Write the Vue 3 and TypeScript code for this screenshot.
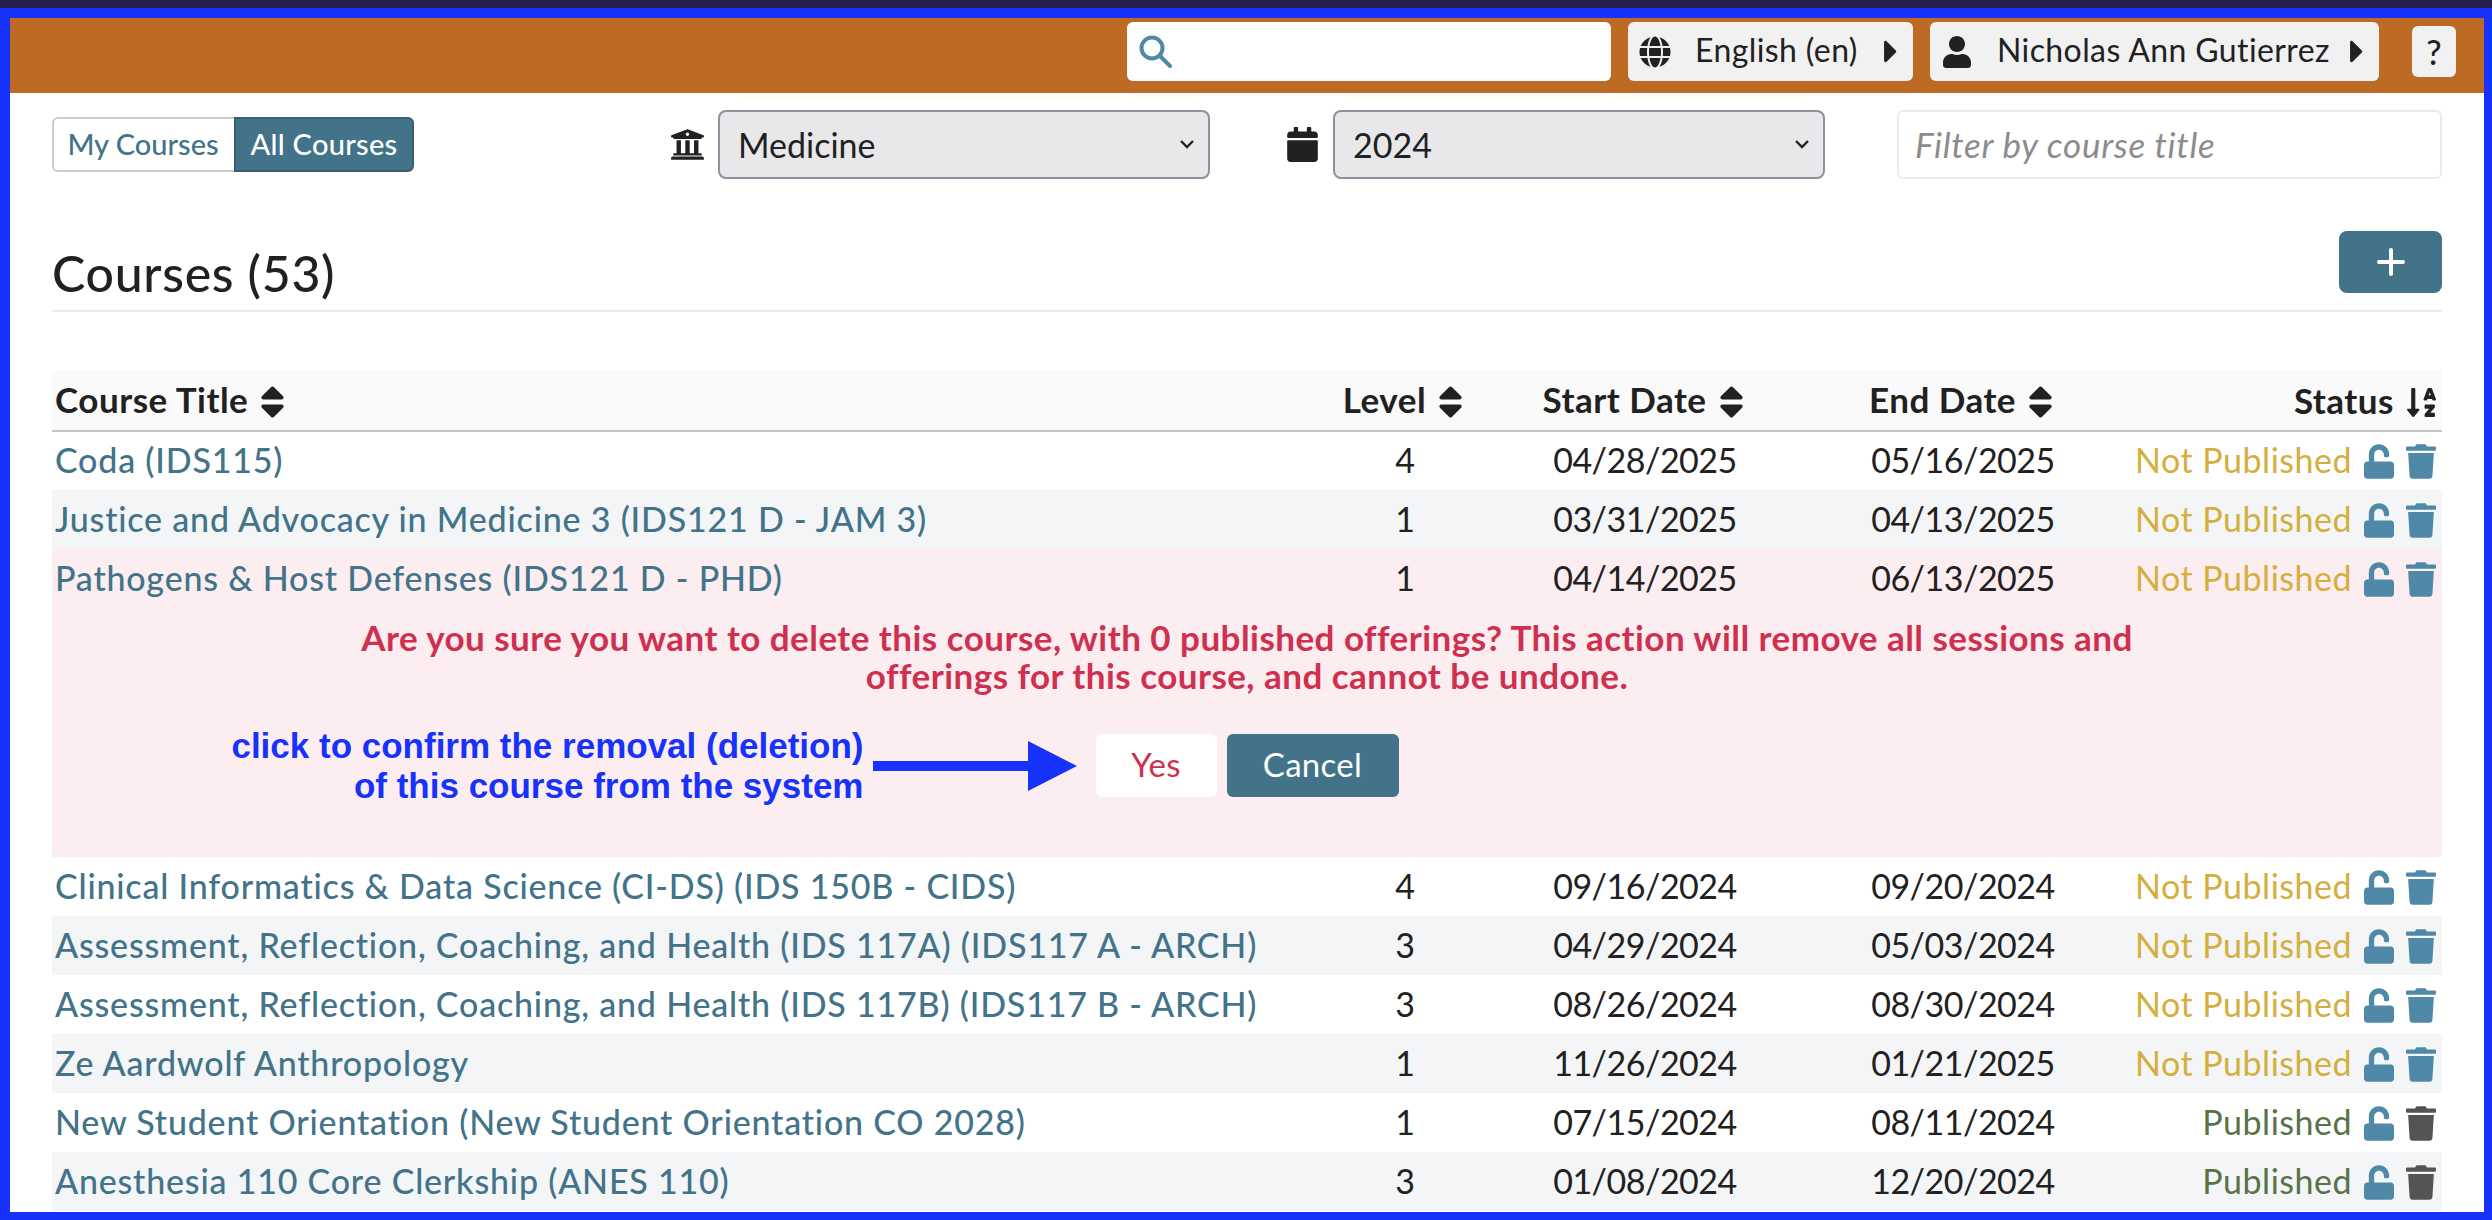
<script setup lang="ts">
type Course = {
  title: string;
  level: number;
  start: string;
  end: string;
  published: boolean;
  confirming?: boolean;
  alt?: boolean;
};

const courses: Course[] = [
  { title: 'Coda (IDS115)', level: 4, start: '04/28/2025', end: '05/16/2025', published: false },
  { title: 'Justice and Advocacy in Medicine 3 (IDS121 D - JAM 3)', level: 1, start: '03/31/2025', end: '04/13/2025', published: false, alt: true },
  { title: 'Pathogens & Host Defenses (IDS121 D - PHD)', level: 1, start: '04/14/2025', end: '06/13/2025', published: false, confirming: true },
  { title: 'Clinical Informatics & Data Science (CI-DS) (IDS 150B - CIDS)', level: 4, start: '09/16/2024', end: '09/20/2024', published: false },
  { title: 'Assessment, Reflection, Coaching, and Health (IDS 117A) (IDS117 A - ARCH)', level: 3, start: '04/29/2024', end: '05/03/2024', published: false, alt: true },
  { title: 'Assessment, Reflection, Coaching, and Health (IDS 117B) (IDS117 B - ARCH)', level: 3, start: '08/26/2024', end: '08/30/2024', published: false },
  { title: 'Ze Aardwolf Anthropology', level: 1, start: '11/26/2024', end: '01/21/2025', published: false, alt: true },
  { title: 'New Student Orientation (New Student Orientation CO 2028)', level: 1, start: '07/15/2024', end: '08/11/2024', published: true },
  { title: 'Anesthesia 110 Core Clerkship (ANES 110)', level: 3, start: '01/08/2024', end: '12/20/2024', published: true, alt: true },
];

const sortPath = 'M41 288h238c21.4 0 32.1 25.9 17 41L177 448c-9.4 9.4-24.6 9.4-33.9 0L24 329c-15.1-15.1-4.4-41 17-41zm255-105L177 64c-9.4-9.4-24.6-9.4-33.9 0L24 183c-15.1 15.1-4.4 41 17 41h238c21.4 0 32.1-25.9 17-41z';
const caretPath = 'M0 384.662V127.338c0-17.818 21.543-26.741 34.142-14.142l128.662 128.662c7.81 7.81 7.81 20.474 0 28.284L34.142 398.804C21.543 411.404 0 402.48 0 384.662z';
const unlockPath = 'M400 256H152V152.9c0-39.6 31.7-72.5 71.3-72.9 40-.4 72.7 32.1 72.7 72v16c0 13.3 10.7 24 24 24h32c13.3 0 24-10.7 24-24v-16C376 68 307.5-.3 223.5 0 139.5.3 72 69.5 72 153.5V256H48c-26.5 0-48 21.5-48 48v160c0 26.5 21.5 48 48 48h352c26.5 0 48-21.5 48-48V304c0-26.5-21.5-48-48-48z';
const trashPath = 'M432 32H312l-9.4-18.7A24 24 0 0 0 281.1 0H166.8a23.72 23.72 0 0 0-21.4 13.3L136 32H16A16 16 0 0 0 0 48v32a16 16 0 0 0 16 16h416a16 16 0 0 0 16-16V48a16 16 0 0 0-16-16zM53.2 467a48 48 0 0 0 47.9 45h245.8a48 48 0 0 0 47.9-45L416 128H32z';
</script>

<template>
  <div class="page">
    <div class="strip"></div>
    <div class="frame">
      <header class="topbar">
        <div class="search">
          <svg class="search-icon" viewBox="0 0 33 33"><circle cx="13" cy="13" r="10.5" /><path d="M21 21L31 31" /></svg>
          <input type="text" />
        </div>
        <button class="top-btn lang">
          <svg class="top-icon" viewBox="0 0 496 512"><path d="M336.5 160C322 70.7 287.8 8 248 8s-74 62.7-88.5 152h177zM152 256c0 22.2 1.2 43.5 3.3 64h185.3c2.1-20.5 3.3-41.8 3.3-64s-1.2-43.5-3.3-64H155.3c-2.1 20.5-3.3 41.8-3.3 64zm324.7-96c-28.6-67.9-86.5-120.4-158-141.6 24.4 33.8 41.2 84.7 50 141.6h108zM177.2 18.4C105.8 39.6 47.8 92.1 19.3 160h108c8.7-56.9 25.5-107.8 49.9-141.6zM487.4 192H372.7c2.1 21 3.3 42.5 3.3 64s-1.2 43-3.3 64h114.6c5.5-20.5 8.6-41.8 8.6-64s-3.1-43.5-8.5-64zM120 256c0-21.5 1.2-43 3.3-64H8.6C3.2 212.5 0 233.8 0 256s3.2 43.5 8.6 64h114.6c-2-21-3.2-42.5-3.2-64zm39.5 96c14.5 89.3 48.7 152 88.5 152s74-62.7 88.5-152h-177zm159.3 141.6c71.4-21.2 129.4-73.7 158-141.6h-108c-8.8 56.9-25.6 107.8-50 141.6zM19.3 352c28.6 67.9 86.5 120.4 158 141.6-24.4-33.8-41.2-84.7-50-141.6h-108z" /></svg>
          <span>English (en)</span>
          <svg class="caret" viewBox="0 0 192 512"><path :d="caretPath" /></svg>
        </button>
        <button class="top-btn user">
          <svg class="top-icon" viewBox="0 0 448 512"><path d="M224 256c70.7 0 128-57.3 128-128S294.7 0 224 0 96 57.3 96 128s57.3 128 128 128zm89.6 32h-16.7c-22.2 10.2-46.9 16-72.9 16s-50.6-5.8-72.9-16h-16.7C60.2 288 0 348.2 0 422.4V464c0 26.5 21.5 48 48 48h352c26.5 0 48-21.5 48-48v-41.6c0-74.2-60.2-134.4-134.4-134.4z" /></svg>
          <span>Nicholas Ann Gutierrez</span>
          <svg class="caret" viewBox="0 0 192 512"><path :d="caretPath" /></svg>
        </button>
        <button class="help">?</button>
      </header>

      <main class="content">
        <div class="toolbar">
          <div class="toggle">
            <button class="toggle-btn">My Courses</button>
            <button class="toggle-btn on">All Courses</button>
          </div>
          <div class="filter school">
            <svg class="filter-icon" viewBox="0 0 512 512"><path d="M496 128v16a8 8 0 0 1-8 8h-24v12c0 6.627-5.373 12-12 12H60c-6.627 0-12-5.373-12-12v-12H24a8 8 0 0 1-8-8v-16a8 8 0 0 1 4.941-7.392l232-88a7.996 7.996 0 0 1 6.118 0l232 88A8 8 0 0 1 496 128zm-24 304H40c-13.255 0-24 10.745-24 24v16a8 8 0 0 0 8 8h464a8 8 0 0 0 8-8v-16c0-13.255-10.745-24-24-24zM96 192v192H60c-6.627 0-12 5.373-12 12v20h416v-20c0-6.627-5.373-12-12-12h-36V192h-64v192h-64V192h-64v192h-64V192H96z" /><circle cx="256" cy="106" r="24" fill="#fff" /></svg>
            <div class="select-wrap">
              <select><option>Medicine</option></select>
              <svg class="chevron" viewBox="0 0 16 10"><path d="M2 2l6 6 6-6" /></svg>
            </div>
          </div>
          <div class="filter year">
            <svg class="filter-icon cal" viewBox="0 0 448 512"><path d="M12 192h424c6.6 0 12 5.4 12 12v260c0 26.5-21.5 48-48 48H48c-26.5 0-48-21.5-48-48V204c0-6.6 5.4-12 12-12zm436-44v-36c0-26.5-21.5-48-48-48h-48V12c0-6.6-5.4-12-12-12h-40c-6.6 0-12 5.4-12 12v52H160V12c0-6.6-5.4-12-12-12h-40c-6.6 0-12 5.4-12 12v52H48C21.5 64 0 85.5 0 112v36c0 6.6 5.4 12 12 12h424c6.6 0 12-5.4 12-12z" /></svg>
            <div class="select-wrap">
              <select><option>2024</option></select>
              <svg class="chevron" viewBox="0 0 16 10"><path d="M2 2l6 6 6-6" /></svg>
            </div>
          </div>
          <input class="title-filter" type="text" placeholder="Filter by course title" />
        </div>

        <div class="heading">
          <h2>Courses (53)</h2>
          <button class="add">
            <svg viewBox="0 0 28 28"><path d="M14 2v24M2 14h24" /></svg>
          </button>
        </div>

        <table>
          <colgroup>
            <col class="c-title" />
            <col class="c-level" />
            <col class="c-start" />
            <col class="c-end" />
            <col />
          </colgroup>
          <thead>
            <tr>
              <th class="left">Course Title <svg class="sort" viewBox="0 0 320 512"><path :d="sortPath" /></svg></th>
              <th>Level <svg class="sort" viewBox="0 0 320 512"><path :d="sortPath" /></svg></th>
              <th>Start Date <svg class="sort" viewBox="0 0 320 512"><path :d="sortPath" /></svg></th>
              <th>End Date <svg class="sort" viewBox="0 0 320 512"><path :d="sortPath" /></svg></th>
              <th class="right">Status <svg class="sort-alpha" viewBox="0 0 448 512"><path d="M176 352h-48V48a16 16 0 0 0-16-16H80a16 16 0 0 0-16 16v304H16c-14.19 0-21.36 17.24-11.29 27.31l80 96a16 16 0 0 0 22.62 0l80-96C197.35 369.26 190.22 352 176 352zm240-64H288a16 16 0 0 0-16 16v32a16 16 0 0 0 16 16h56l-61.26 70.45A32 32 0 0 0 272 446.37V464a16 16 0 0 0 16 16h128a16 16 0 0 0 16-16v-32a16 16 0 0 0-16-16h-56l61.26-70.45A32 32 0 0 0 432 321.63V304a16 16 0 0 0-16-16zm31.06-85.38l-59.27-160A16 16 0 0 0 372.72 32h-41.44a16 16 0 0 0-15.07 10.62l-59.27 160A16 16 0 0 0 272 224h24.83a16 16 0 0 0 15.23-11.08l4.42-12.92h71l4.42 12.92A16 16 0 0 0 407.16 224H432a16 16 0 0 0 15.06-21.38zM335.61 144L352 96l16.39 48z" /></svg></th>
            </tr>
          </thead>
          <tbody v-for="c in courses" :key="c.title">
            <tr :class="{ alt: c.alt, pink: c.confirming }">
              <td class="left"><a>{{ c.title }}</a></td>
              <td>{{ c.level }}</td>
              <td class="date">{{ c.start }}</td>
              <td class="date">{{ c.end }}</td>
              <td class="right status">
                <span :class="c.published ? 'published' : 'unpublished'">{{ c.published ? 'Published' : 'Not Published' }}</span>
                <svg class="unlock" viewBox="0 0 448 512"><path :d="unlockPath" /></svg>
                <svg class="trash" :class="{ dark: c.published }" viewBox="0 0 448 512"><path :d="trashPath" /></svg>
              </td>
            </tr>
            <tr v-if="c.confirming" class="pink confirm-row">
              <td colspan="5">
                <p class="warning">Are you sure you want to delete this course, with 0 published offerings? This action will remove all sessions and offerings for this course, and cannot be undone.</p>
                <div class="actions">
                  <div class="note">
                    <span>click to confirm the removal (deletion)<br />of this course from the system</span>
                    <svg class="arrow" viewBox="0 0 204 50"><path d="M0 20h155V0l49 25-49 25V30H0z" /></svg>
                  </div>
                  <button class="yes">Yes</button>
                  <button class="cancel">Cancel</button>
                </div>
              </td>
            </tr>
          </tbody>
        </table>
      </main>
    </div>
  </div>
</template>

<style>
html, body {
  margin: 0;
  overflow: hidden;
}
</style>

<style scoped>
.page {
  width: 2492px;
  height: 1220px;
  display: flex;
  flex-direction: column;
  overflow: hidden;
  font-family: Lato, "Open Sans", sans-serif;
  font-size: 34px;
  color: #212121;
}

.strip {
  height: 8px;
  background: #262050;
  flex: none;
}

.frame {
  flex: 1;
  min-height: 0;
  border: solid #1632fb;
  border-width: 10px 8px 8px 10px;
  background: #fff;
  overflow: hidden;
}

.topbar {
  height: 75px;
  background: #bd6b24;
  display: flex;
  align-items: center;
  justify-content: flex-end;
  padding-right: 28px;
  box-sizing: border-box;
}

.search {
  width: 484px;
  height: 59px;
  background: #fff;
  border-radius: 6px;
  display: flex;
  align-items: center;
  padding-left: 12px;
  box-sizing: border-box;
  margin-right: 17px;
  margin-top: -8px;
}

.search-icon {
  width: 33px;
  height: 33px;
  fill: none;
  stroke: #4f89a7;
  stroke-width: 4;
  stroke-linecap: round;
  flex: none;
}

.search input {
  border: 0;
  outline: 0;
  flex: 1;
  min-width: 0;
  font: inherit;
  background: transparent;
}

.top-btn {
  height: 59px;
  border: 0;
  border-radius: 6px;
  background: #f1f1f2;
  display: flex;
  align-items: center;
  font: inherit;
  font-size: 32px;
  letter-spacing: 0.4px;
  color: #212121;
  padding: 0 15px 0 11px;
  box-sizing: border-box;
  margin-top: -8px;
}

.top-btn span {
  position: relative;
  top: -2px;
}

.lang {
  width: 285px;
  margin-right: 17px;
}

.user {
  width: 449px;
  margin-right: 33px;
}

.top-icon {
  width: 32px;
  height: 32px;
  fill: #212121;
  flex: none;
  margin-right: 24px;
}

.caret {
  width: 14px;
  height: 37px;
  fill: #212121;
  margin-left: auto;
}

.help {
  width: 44px;
  height: 51px;
  border: 0;
  border-radius: 6px;
  background: #f1f1f2;
  font: inherit;
  font-size: 34px;
  font-weight: 500;
  color: #212121;
  padding: 0;
  margin-top: -8px;
}

.content {
  padding: 17px 42px 0;
}

.toolbar {
  display: flex;
  align-items: center;
  height: 69px;
}

.toggle {
  display: flex;
  width: 362px;
  height: 55px;
}

.toggle-btn {
  flex: none;
  width: 182px;
  height: 55px;
  border: 2px solid #ccc;
  border-right: 0;
  border-radius: 6px 0 0 6px;
  background: #fff;
  color: #427389;
  font: inherit;
  font-weight: 500;
  font-size: 29px;
  padding: 0 2px 3px 0;
}

.toggle-btn.on {
  width: 180px;
  background: #427389;
  border: 2px solid #375f72;
  border-radius: 0 6px 6px 0;
  color: #fff;
  letter-spacing: 0.3px;
  padding: 0 0 3px;
}

.filter {
  display: flex;
  align-items: center;
}

.school {
  margin-left: 256px;
}

.year {
  margin-left: 77px;
}

.filter-icon {
  width: 35px;
  height: 35px;
  fill: #212121;
  margin-right: 13px;
  flex: none;
}

.filter-icon.cal {
  width: 31px;
  margin-right: 15px;
}

.select-wrap {
  position: relative;
  width: 492px;
  height: 69px;
}

select {
  appearance: none;
  width: 100%;
  height: 100%;
  border: 2px solid #908f9d;
  border-radius: 8px;
  background: #e8e8ea;
  font: inherit;
  font-size: 34px;
  color: #212121;
  padding: 0 0 0 18px;
  box-sizing: border-box;
}

.chevron {
  position: absolute;
  right: 15px;
  top: 29px;
  width: 16px;
  height: 10px;
  fill: none;
  stroke: #212121;
  stroke-width: 2.4;
  pointer-events: none;
}

.title-filter {
  width: 545px;
  height: 69px;
  margin-left: 72px;
  border: 2px solid #e8eceb;
  border-radius: 6px;
  box-sizing: border-box;
  padding: 0 16px 2px;
  font: inherit;
  font-size: 35px;
  letter-spacing: 0.7px;
  outline: 0;
  background: #fff;
}

.title-filter::placeholder {
  color: #8c8c8c;
  font-style: italic;
  opacity: 1;
}

.heading {
  display: flex;
  align-items: flex-end;
  justify-content: space-between;
  height: 133px;
  box-sizing: border-box;
  border-bottom: 2px solid #e8eceb;
  padding-bottom: 17px;
}

.heading h2 {
  margin: 0 0 -10px;
  font-size: 50px;
  font-weight: 500;
  letter-spacing: 0.7px;
  line-height: 1.2;
}

.add {
  width: 103px;
  height: 62px;
  background: #427389;
  border: 0;
  border-radius: 8px;
  padding: 0;
  display: flex;
  align-items: center;
  justify-content: center;
}

.add svg {
  width: 28px;
  height: 28px;
  fill: none;
  stroke: #fff;
  stroke-width: 4;
  stroke-linecap: round;
}

table {
  width: 2390px;
  margin-top: 58px;
  border-collapse: collapse;
  table-layout: fixed;
}

.c-title { width: 1268px; }
.c-level { width: 170px; }
.c-start { width: 310px; }
.c-end { width: 326px; }

th {
  height: 61px;
  padding: 0 3px;
  background: #fafafa;
  border-bottom: 2px solid #bfc5c9;
  font-weight: 700;
  font-size: 35px;
  letter-spacing: 0.5px;
  text-align: center;
  white-space: nowrap;
  box-sizing: border-box;
}

td {
  height: 59px;
  padding: 0 3px 3px;
  text-align: center;
  white-space: nowrap;
  box-sizing: border-box;
}

tr.alt td {
  background: #f3f5f7;
}

tr.pink td {
  background: #fcedf0;
}

th.left,
td.left {
  text-align: left;
}

th.right,
td.right {
  text-align: right;
  padding-right: 6px;
}

td a {
  color: #427389;
  font-weight: 500;
  letter-spacing: 0.8px;
}

.date {
  letter-spacing: -0.48px;
}

.unpublished,
.published {
  letter-spacing: 0.5px;
}

.unpublished {
  color: #d4af3e;
}

.published {
  color: #5a7247;
}

.sort {
  width: 25px;
  height: 40px;
  fill: #212121;
  vertical-align: -9px;
  margin-left: 3px;
  margin-right: 4px;
}

.left .sort {
  margin-right: 0;
}

.sort-alpha {
  width: 29px;
  height: 33px;
  fill: #212121;
  vertical-align: -5px;
  margin-left: 4px;
}

.unlock,
.trash {
  width: 30px;
  height: 35px;
  fill: #4f89a7;
  vertical-align: -6px;
  margin-left: 12px;
}

.trash.dark {
  fill: #545454;
}

.confirm-row td {
  height: 249px;
  vertical-align: top;
  padding: 10px 0 0;
}

.warning {
  width: 1800px;
  margin: 0 auto;
  color: #cf304f;
  font-weight: 700;
  font-size: 35px;
  letter-spacing: 0.46px;
  line-height: 38px;
  text-align: center;
  white-space: normal;
}

.actions {
  position: relative;
  width: max-content;
  margin: 40px auto 0;
  display: flex;
  gap: 10px;
}

.yes,
.cancel {
  height: 63px;
  border: 0;
  border-radius: 6px;
  font: inherit;
  font-size: 33px;
  letter-spacing: 0.3px;
  padding: 0 0 3px;
}

.yes {
  width: 121px;
  background: #fff;
  color: #cf304f;
}

.cancel {
  width: 172px;
  background: #427389;
  color: #fff;
}

.note {
  position: absolute;
  right: 100%;
  top: 0;
  height: 100%;
  margin-right: 19px;
  display: flex;
  align-items: center;
  gap: 9px;
  white-space: nowrap;
}

.note span {
  font-family: "Liberation Sans", Arial, sans-serif;
  font-weight: 700;
  font-size: 35px;
  line-height: 40px;
  color: #1632fb;
  text-align: right;
}

.arrow {
  width: 204px;
  height: 50px;
  fill: #1632fb;
  flex: none;
}
</style>
